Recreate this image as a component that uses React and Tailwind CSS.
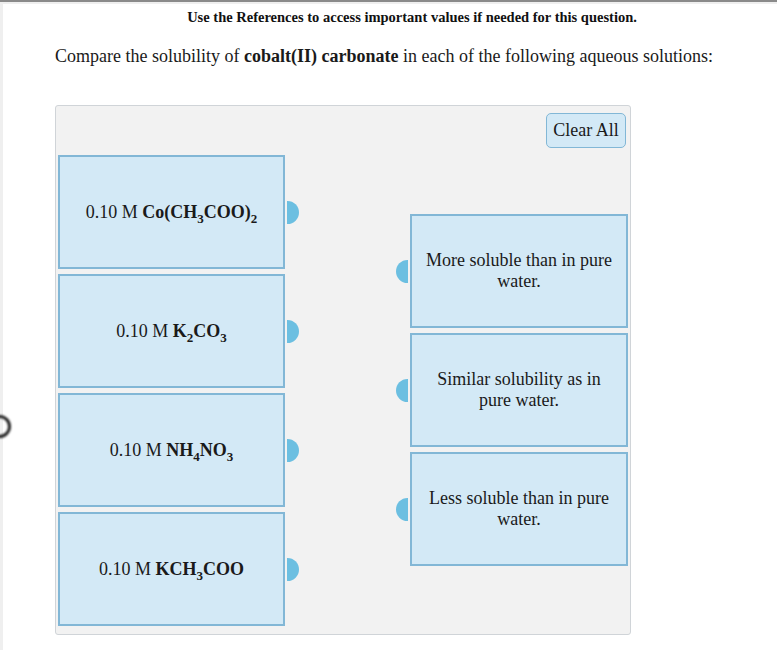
const Sub = ({ children }) => <sub className="text-[13px] bottom-[-5px]">{children}</sub>;

const solutions = [
  { id: 'coac', formula: <>Co(CH<Sub>3</Sub>COO)<Sub>2</Sub></> },
  { id: 'k2co3', formula: <>K<Sub>2</Sub>CO<Sub>3</Sub></> },
  { id: 'nh4no3', formula: <>NH<Sub>4</Sub>NO<Sub>3</Sub></> },
  { id: 'kac', formula: <>KCH<Sub>3</Sub>COO</> },
];

const answers = [
  'More soluble than in pure water.',
  'Similar solubility as in pure water.',
  'Less soluble than in pure water.',
];

// draggable source card with its connector on the right
const SourceItem = ({ formula }) => (
  <div className="flex items-center gap-[2px]">
    <div className="w-[227px] h-[114px] bg-[#d3e9f6] border-2 border-[#82b7d6] flex items-center justify-center text-[18px] leading-[21px] text-[#1a1a1a]">
      <span>
        0.10 M <b>{formula}</b>
      </span>
    </div>
    <div className="w-[12px] h-[23px] rounded-r-full bg-[#6cbfe1]" />
  </div>
);

// drop target with its connector on the left
const TargetItem = ({ label }) => (
  <div className="flex items-center gap-[2px]">
    <div className="w-[12px] h-[23px] rounded-l-full bg-[#6cbfe1]" />
    <div className="w-[218px] h-[114px] bg-[#d3e9f6] border-2 border-[#82b7d6] flex items-center justify-center px-[12px] text-center text-[18px] leading-[21px] text-[#1a1a1a]">
      {label}
    </div>
  </div>
);

export default function App() {
  return (
    <div className="min-h-[650px] bg-[#efefef] border-t-2 border-[#8a8a8a] pl-[3px] pt-[2px] font-['Liberation_Serif',serif] relative overflow-hidden">
      <div className="bg-white min-h-[646px]">
        <p className="pt-[3px] pl-[44px] text-center text-[14.5px] leading-[20px] font-bold text-[#111]">
          Use the References to access important values if needed for this question.
        </p>
        <p className="mt-[17px] pl-[52px] text-[18px] leading-[24px] text-[#1a1a1a]">
          Compare the solubility of <b>cobalt(II) carbonate</b> in each of the following aqueous solutions:
        </p>

        <div className="ml-[52px] mt-[37px] w-[576px] h-[530px] bg-[#f2f2f2] border border-[#d0d4d8] rounded-[3px] px-[2px] pt-[7px]">
          <div className="flex justify-end pr-[2px]">
            <button className="w-[80px] h-[35px] bg-[#d3e9f6] border border-[#82b7d6] rounded-[5px] text-[18px] text-[#1a1a1a]">
              Clear All
            </button>
          </div>
          <div className="flex justify-between mt-[7px]">
            <div className="flex flex-col gap-[5px]">
              {solutions.map((s) => (
                <SourceItem key={s.id} formula={s.formula} />
              ))}
            </div>
            <div className="flex flex-col gap-[5px] mt-[59px]">
              {answers.map((a) => (
                <TargetItem key={a} label={a} />
              ))}
            </div>
          </div>
        </div>
      </div>
      <div className="absolute left-[-12px] top-[413px] w-[23px] h-[23px] rounded-full border-[3px] border-[#222] blur-[1px]" />
    </div>
  );
}
